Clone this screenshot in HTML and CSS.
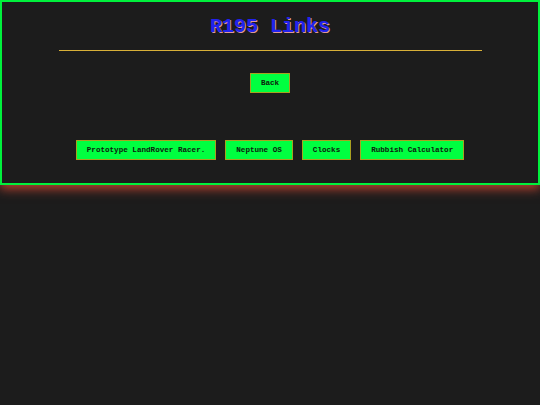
FILE: index.html
```html
<!DOCTYPE html>
<html>
<head>
<meta charset="utf-8">
<link rel="stylesheet" href="styles.css">
</head>
<body>
<div class="header">
  <h1 class="title">R195 Links</h1>
  <hr class="rule">
  <div class="back-row"><a class="btn" href="#">Back</a></div>
  <div class="links">
    <a class="btn" href="#">Prototype LandRover Racer.</a>
    <a class="btn" href="#">Neptune OS</a>
    <a class="btn" href="#">Clocks</a>
    <a class="btn" href="#">Rubbish Calculator</a>
  </div>
</div>
</body>
</html>
```
FILE: styles.css
```css
html, body {
  margin: 0;
  padding: 0;
  background: #1c1c1c;
  height: 100%;
}
body {
  font-family: "Liberation Mono", "Courier New", monospace;
}
.header {
  border: 2px solid #00f03c;
  box-sizing: border-box;
  height: 185px;
  padding-top: 13px;
  display: flex;
  flex-direction: column;
  align-items: center;
  box-shadow: 0 4px 10px rgba(200, 70, 50, 0.9);
}
.title {
  margin: 0;
  font-size: 20px;
  line-height: 23px;
  font-weight: bold;
  color: #2222ee;
  text-shadow: 1px 1px 0 #e09898;
}
.rule {
  width: 423px;
  margin: 12px 0 0 0;
  border: 0;
  border-top: 1px solid #d8b038;
  height: 0;
}
.back-row {
  margin-top: 22px;
  display: flex;
}
.links {
  margin-top: 47px;
  display: flex;
  gap: 9px;
}
.btn {
  display: block;
  background: #00ff40;
  border: 1px solid #a8a020;
  padding: 5px 10px;
  font-size: 7.6px;
  line-height: 8px;
  font-weight: bold;
  color: #0c200c;
  text-decoration: none;
  white-space: nowrap;
}
```
